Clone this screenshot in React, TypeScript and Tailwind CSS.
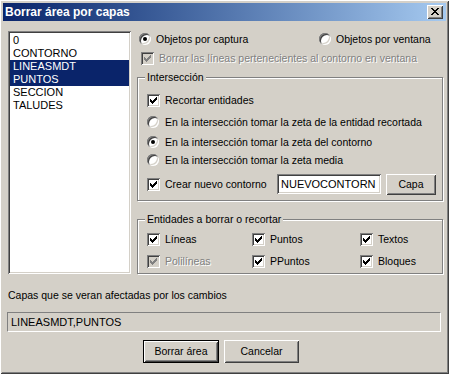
import React from 'react';

const RAISED =
  'shadow-[inset_1px_1px_0_#ffffff,inset_-1px_-1px_0_#404040,inset_2px_2px_0_#d4d0c8,inset_-2px_-2px_0_#808080]';
const SUNKEN =
  'shadow-[inset_1px_1px_0_#808080,inset_-1px_-1px_0_#ffffff,inset_2px_2px_0_#404040,inset_-2px_-2px_0_#d4d0c8]';
const ETCHED = 'border border-[#808080] shadow-[inset_1px_1px_0_#ffffff,1px_1px_0_#ffffff]';

const CHECK = ['......x', '.....xx', 'x...xxx', 'xx.xxx.', 'xxxxx..', '.xxx...', '..x....'];
const CLOSE_X = ['xx....xx', '.xx..xx.', '..xxxx..', '...xx...', '..xxxx..', '.xx..xx.', 'xx....xx'];

function Pixels({ rows, color, x, y }: { rows: string[]; color: string; x: number; y: number }) {
  return (
    <>
      {rows.flatMap((r, j) =>
        [...r].map((c, i) =>
          c === 'x' ? <rect key={`${i}-${j}`} x={x + i} y={y + j} width={1} height={1} fill={color} /> : null
        )
      )}
    </>
  );
}

function Check({ checked = true, disabled = false }: { checked?: boolean; disabled?: boolean }) {
  return (
    <div className={`relative w-[13px] h-[13px] shrink-0 ${disabled ? 'bg-[#d4d0c8]' : 'bg-white'} ${SUNKEN}`}>
      {checked && (
        <svg width="13" height="13" viewBox="0 0 13 13" className="absolute inset-0" shapeRendering="crispEdges">
          <Pixels rows={CHECK} color={disabled ? '#808080' : '#000000'} x={3} y={3} />
        </svg>
      )}
    </div>
  );
}

function Radio({ checked = false }: { checked?: boolean }) {
  return (
    <div className={`w-[12px] h-[12px] shrink-0 rounded-full bg-white flex items-center justify-center ${SUNKEN}`}>
      {checked && <div className="w-[4px] h-[4px] rounded-full bg-black" />}
    </div>
  );
}

function Label({ children, disabled = false }: { children: React.ReactNode; disabled?: boolean }) {
  return (
    <span
      className={`whitespace-nowrap ${disabled ? 'text-[#808080] [text-shadow:1px_1px_0_#ffffff]' : ''}`}
    >
      {children}
    </span>
  );
}

const LAYERS = ['0', 'CONTORNO', 'LINEASMDT', 'PUNTOS', 'SECCION', 'TALUDES'];
const SELECTED = ['LINEASMDT', 'PUNTOS'];

export default function App() {
  return (
    <div
      className={`w-[449px] h-[374px] bg-[#d4d0c8] p-[3px] overflow-hidden text-[10.5px] leading-[13px] text-black font-['Liberation_Sans',Arial,sans-serif] ${RAISED}`}
    >
      {/* Title bar */}
      <div className="h-[18px] flex items-center justify-between pl-[2px] pr-[3px] bg-gradient-to-r from-[#0a246a] to-[#a6caf0]">
        <span className="text-white font-bold text-[12px]">Borrar área por capas</span>
        <div className={`w-[16px] h-[14px] bg-[#d4d0c8] ${RAISED}`}>
          <svg width="16" height="14" viewBox="0 0 16 14" shapeRendering="crispEdges">
            <Pixels rows={CLOSE_X} color="#000000" x={4} y={3} />
          </svg>
        </div>
      </div>

      <div className="pl-[5px] pt-[10px]">
        <div className="flex">
          {/* Layer list */}
          <div className={`w-[123px] h-[243px] bg-white pt-[3px] px-[2px] text-[11px] ${SUNKEN}`}>
            {LAYERS.map((l) => (
              <div
                key={l}
                className={`h-[13px] pl-[3px] ${SELECTED.includes(l) ? 'bg-[#0a246a] text-white' : ''}`}
              >
                {l}
              </div>
            ))}
          </div>

          <div className="ml-[6px] w-[307px]">
            <div className="h-[16px] flex items-center">
              <div className="w-[182px] flex items-center pl-[2px]">
                <Radio checked />
                <span className="ml-[5px]"><Label>Objetos por captura</Label></span>
              </div>
              <Radio />
              <span className="ml-[5px]"><Label>Objetos por ventana</Label></span>
            </div>
            <div className="h-[16px] mt-[3px] flex items-center pl-[4px]">
              <Check disabled />
              <span className="ml-[5px]"><Label disabled>Borrar las líneas pertenecientes al contorno en ventana</Label></span>
            </div>

            {/* Intersección */}
            <div className={`relative mt-[11px] w-[306px] h-[124px] pt-[14px] pl-[9px] ${ETCHED}`}>
              <span className="absolute top-[-7px] left-[7px] px-[2px] bg-[#d4d0c8]">Intersección</span>
              <div className="h-[16px] flex items-center">
                <Check />
                <span className="ml-[5px]"><Label>Recortar entidades</Label></span>
              </div>
              <div className="h-[16px] mt-[6px] flex items-center">
                <Radio />
                <span className="ml-[6px]"><Label>En la intersección tomar la zeta de la entidad recortada</Label></span>
              </div>
              <div className="h-[16px] mt-[4px] flex items-center">
                <Radio checked />
                <span className="ml-[6px]"><Label>En la intersección tomar la zeta del contorno</Label></span>
              </div>
              <div className="h-[16px] mt-[2px] flex items-center">
                <Radio />
                <span className="ml-[6px]"><Label>En la intersección tomar la zeta media</Label></span>
              </div>
              <div className="h-[22px] mt-[5px] flex items-center">
                <div className="w-[130px] flex items-center">
                  <Check />
                  <span className="ml-[5px]"><Label>Crear nuevo contorno</Label></span>
                </div>
                <div className={`w-[104px] h-[20px] bg-white flex items-center pl-[4px] text-[11px] ${SUNKEN}`}>NUEVOCONTORN</div>
                <div className={`ml-[5px] w-[50px] h-[21px] flex items-center justify-center ${RAISED}`}>Capa</div>
              </div>
            </div>

            {/* Entidades */}
            <div className={`relative mt-[18px] w-[306px] h-[55px] pt-[11px] pl-[9px] ${ETCHED}`}>
              <span className="absolute top-[-7px] left-[7px] px-[2px] bg-[#d4d0c8]">Entidades a borrar o recortar</span>
              <div className="h-[16px] flex items-center">
                <div className="w-[105px] flex items-center">
                  <Check />
                  <span className="ml-[5px]"><Label>Líneas</Label></span>
                </div>
                <div className="w-[108px] flex items-center">
                  <Check />
                  <span className="ml-[5px]"><Label>Puntos</Label></span>
                </div>
                <div className="flex items-center">
                  <Check />
                  <span className="ml-[5px]"><Label>Textos</Label></span>
                </div>
              </div>
              <div className="h-[16px] mt-[6px] flex items-center">
                <div className="w-[105px] flex items-center">
                  <Check disabled />
                  <span className="ml-[5px]"><Label disabled>Polilíneas</Label></span>
                </div>
                <div className="w-[108px] flex items-center">
                  <Check />
                  <span className="ml-[5px]"><Label>PPuntos</Label></span>
                </div>
                <div className="flex items-center">
                  <Check />
                  <span className="ml-[5px]"><Label>Bloques</Label></span>
                </div>
              </div>
            </div>
          </div>
        </div>

        <div className="mt-[15px] h-[13px]">Capas que se veran afectadas por los cambios</div>
        <div className="-ml-[1px] mt-[10px] w-[434px] h-[20px] flex items-center pl-[3px] text-[11px] border border-t-[#808080] border-l-[#808080] border-b-white border-r-white">
          LINEASMDT,PUNTOS
        </div>

        <div className="mt-[8px] flex ml-[135px]">
          <div className="w-[76px] h-[23px] border border-black">
            <div className={`w-full h-full flex items-center justify-center ${RAISED}`}>Borrar área</div>
          </div>
          <div className={`ml-[5px] w-[75px] h-[23px] flex items-center justify-center ${RAISED}`}>Cancelar</div>
        </div>
      </div>
    </div>
  );
}
